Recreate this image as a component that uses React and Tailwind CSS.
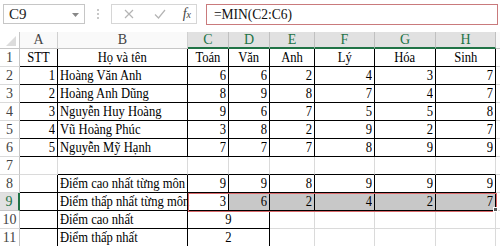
import React from "react";

const COLS = ["A", "B", "C", "D", "E", "F", "G", "H"];
const WIDTHS = [38, 130, 41, 41, 45, 60, 61, 60];
const SELECTED_COLS = ["C", "D", "E", "F", "G", "H"];

const people = [
  ["1", "Hoàng Văn Anh", 6, 6, 2, 4, 3, 7],
  ["2", "Hoàng Anh Dũng", 8, 9, 8, 7, 4, 7],
  ["3", "Nguyễn Huy Hoàng", 9, 6, 7, 5, 5, 8],
  ["4", "Vũ Hoàng Phúc", 3, 8, 2, 9, 2, 7],
  ["5", "Nguyễn Mỹ Hạnh", 7, 7, 7, 8, 9, 9],
];

const serif = "font-['Liberation_Serif','Times_New_Roman',serif]";

function Cell({ children, align = "left", black, blackBottom, fill, span }) {
  const border = black
    ? "border-r border-b border-r-black border-b-black"
    : blackBottom
    ? "border-r border-b border-r-[#dadada] border-b-black"
    : "border-r border-b border-[#dadada]";
  return (
    <div
      className={`${border} h-[18px] flex items-center overflow-visible whitespace-nowrap px-[2px] text-[14px] leading-none text-black ${
        align === "right" ? "justify-end" : align === "center" ? "justify-center" : "justify-start"
      } ${fill || "bg-white"} ${span ? "col-span-2" : ""}`}
    >
      {children !== undefined && (
        <span className={`inline-block scale-x-[0.9] ${align === "right" ? "origin-right" : align === "center" ? "origin-center" : "origin-left"}`}>
          {children}
        </span>
      )}
    </div>
  );
}

function RowHead({ n, active }) {
  return (
    <div
      className={`h-[18px] flex items-center justify-center text-[14px] leading-none border-b ${
        active
          ? "bg-[#e1e1e1] text-[#217346] border-b-[#c6c6c6] border-r-2 border-r-[#217346]"
          : "bg-white text-[#444] border-b-[#dadada] border-r border-r-[#c6c6c6]"
      }`}
    >
      {n}
    </div>
  );
}

function Filler({ gray }) {
  return <div className={`h-[18px] border-b ${gray ? "border-[#dadada]" : "border-[#dadada]"} bg-white`} />;
}

export default function App() {
  const rows = [];

  // row 1: headings
  rows.push(
    <React.Fragment key="r1">
      <RowHead n={1} />
      <Cell align="center" black>STT</Cell>
      <Cell align="center" black>Họ và tên</Cell>
      {["Toán", "Văn", "Anh", "Lý", "Hóa", "Sinh"].map((s) => (
        <Cell key={s} align="center" black>{s}</Cell>
      ))}
      <Filler />
    </React.Fragment>
  );

  people.forEach((p, i) => {
    rows.push(
      <React.Fragment key={"p" + i}>
        <RowHead n={i + 2} />
        <Cell align="right" black>{p[0]}</Cell>
        <Cell black>{p[1]}</Cell>
        {p.slice(2).map((v, j) => (
          <Cell key={j} align="right" black>{v}</Cell>
        ))}
        <Filler />
      </React.Fragment>
    );
  });

  // row 7: empty, bottom of B..H is the top edge of the summary block
  rows.push(
    <React.Fragment key="r7">
      <RowHead n={7} />
      <Cell />
      {COLS.slice(1).map((c) => (
        <Cell key={c} blackBottom />
      ))}
      <Filler />
    </React.Fragment>
  );

  const maxes = [9, 9, 8, 9, 9, 9];
  const mins = [3, 6, 2, 4, 2, 7];

  rows.push(
    <React.Fragment key="r8">
      <RowHead n={8} />
      <Cell black />
      <Cell black>Điểm cao nhất từng môn</Cell>
      {maxes.map((v, j) => (
        <Cell key={j} align="right" black>{v}</Cell>
      ))}
      <Filler />
    </React.Fragment>
  );

  rows.push(
    <React.Fragment key="r9">
      <RowHead n={9} active />
      <Cell black />
      <Cell black>Điểm thấp nhất từng môn</Cell>
      {mins.map((v, j) => (
        <Cell key={j} align="right" black fill={j === 0 ? "bg-white" : "bg-[#c8c8c8]"}>{v}</Cell>
      ))}
      <Filler />
    </React.Fragment>
  );

  [
    [10, "Điểm cao nhất", 9],
    [11, "Điểm thấp nhất", 2],
  ].forEach(([n, label, v]) => {
    rows.push(
      <React.Fragment key={"r" + n}>
        <RowHead n={n} />
        <Cell black />
        <Cell black>{label}</Cell>
        <Cell align="center" black span>{v}</Cell>
        <Cell />
        <Cell />
        <Cell />
        <Cell />
        <Filler />
      </React.Fragment>
    );
  });

  return (
    <div className={`w-[500px] h-[246px] overflow-hidden bg-white ${serif}`}>
      {/* formula bar */}
      <div className="h-[32px] flex items-start pt-[4px] pl-[3px] gap-0">
        <div className="w-[82px] h-[20px] border border-[#c6c6c6] flex items-center justify-between pl-[5px] pr-[5px]">
          <span className="text-[15px] leading-none text-[#222]">C9</span>
          <svg width="7" height="4" viewBox="0 0 7 4" className="mt-[1px]">
            <path d="M0 0h7L3.5 4z" fill="#888" />
          </svg>
        </div>
        <div className="w-[26px] h-[20px] flex flex-col items-center justify-center gap-[2px]">
          <span className="w-[2px] h-[2px] bg-[#c8c8c8]" />
          <span className="w-[2px] h-[2px] bg-[#c8c8c8]" />
          <span className="w-[2px] h-[2px] bg-[#c8c8c8]" />
        </div>
        <div className="w-[86px] h-[20px] border border-[#d6d6d6] flex items-center pl-[12px] pr-[5px]">
          <svg width="10" height="10" viewBox="0 0 10 10">
            <path d="M1 1l8 8M9 1l-8 8" stroke="#b4b4b4" strokeWidth="1.2" />
          </svg>
          <svg width="12" height="10" viewBox="0 0 12 10" className="ml-[20px]">
            <path d="M1 5.5l3.5 3.5L11 1" stroke="#b4b4b4" strokeWidth="1.2" fill="none" />
          </svg>
          <span className="ml-auto text-[14px] italic leading-none text-[#444]">
            f<span className="text-[10px]">x</span>
          </span>
        </div>
        <div className="ml-[9px] w-[292px] h-[21px] border border-[#c97a7c] flex items-center pl-[7px]">
          <span className="text-[15px] leading-none text-[#111] inline-block scale-x-[0.9] origin-left">=MIN(C2:C6)</span>
        </div>
      </div>

      {/* sheet */}
      <div className="relative">
        <div
          className="grid"
          style={{ gridTemplateColumns: `20px ${WIDTHS.map((w) => w + "px").join(" ")} 4px` }}
        >
          {/* column header row */}
          <div className="h-[17px] relative bg-white border-r border-[#c6c6c6] border-b border-b-[#c6c6c6]">
            <svg width="10" height="10" viewBox="0 0 10 10" className="absolute right-[3px] bottom-[2px]">
              <path d="M10 0v10H0z" fill="#dcdcdc" />
            </svg>
          </div>
          {COLS.map((c) => {
            const sel = SELECTED_COLS.includes(c);
            return (
              <div
                key={c}
                className={`h-[17px] flex items-center justify-center text-[14px] leading-none border-r ${
                  sel
                    ? "bg-[#e1e1e1] text-[#217346] border-r-[#c0c0c0] border-b-2 border-b-[#217346]"
                    : "bg-[#f9f9f9] text-[#444] border-r-[#d0d0d0] border-b border-b-[#c6c6c6]"
                }`}
              >
                {c}
              </div>
            );
          })}
          <div className="h-[17px] bg-[#f9f9f9] border-b border-[#c6c6c6]" />
          {rows}
        </div>

        {/* selection C9:H9 */}
        <div className="absolute left-[188px] top-[161px] w-[309px] h-[19px] border border-[#d9686a] pointer-events-none" />
        <div className="absolute left-[493px] top-[175px] w-[5px] h-[5px] bg-[#555] border border-white pointer-events-none" />
      </div>
    </div>
  );
}
